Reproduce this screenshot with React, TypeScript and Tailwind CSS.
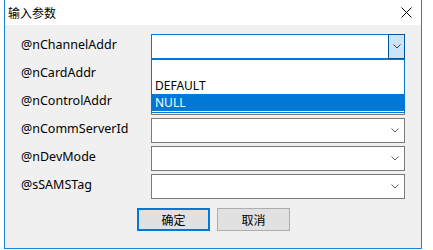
import type { ReactNode } from "react";

const params = [
  "@nChannelAddr",
  "@nCardAddr",
  "@nControlAddr",
  "@nCommServerId",
  "@nDevMode",
  "@sSAMSTag",
];

const font = { fontFamily: '"Noto Sans", "Noto Sans CJK SC", sans-serif' };

function Chevron({ color = "#606060" }: { color?: string }) {
  return (
    <svg width="8" height="5" viewBox="0 0 8 5" className="block">
      <polyline points="0.5,0.5 4,4 7.5,0.5" fill="none" stroke={color} strokeWidth="1" />
    </svg>
  );
}

function Combo({ active, children }: { active?: boolean; children?: ReactNode }) {
  if (active) {
    return (
      <div className="relative h-[25px] w-[254px]">
        <div className="flex h-full border border-[#0078d7] bg-white">
          <div className="flex-1" />
          <div className="-my-px -mr-px flex w-[17px] items-center justify-center border border-[#005499] bg-[#cce4f7]">
            <Chevron color="#404040" />
          </div>
        </div>
        {children}
      </div>
    );
  }
  return (
    <div className="flex h-[25px] w-[254px] items-center justify-end border border-[#7a7a7a] bg-white pr-[5px]">
      <Chevron />
    </div>
  );
}

export default function App() {
  return (
    <div className="h-[250px] w-[433px] bg-white text-[12px] text-black" style={font}>
      <div className="ml-[4px] flex h-[249px] w-[418px] flex-col border-x border-b border-[#1883d7]">
        <div className="flex h-[25px] items-center justify-between bg-white pl-[3px] pr-[9px]">
          <span className="leading-none" style={{ fontFamily: '"Noto Sans CJK SC", sans-serif' }}>
            输入参数
          </span>
          <svg width="11" height="11" viewBox="0 0 11 11" className="block">
            <path d="M0.5 0.5 L10.5 10.5 M10.5 0.5 L0.5 10.5" stroke="#000" strokeWidth="1" fill="none" />
          </svg>
        </div>

        <div className="flex flex-1 flex-col bg-[#f0f0f0] pt-[9px]">
          <div className="flex flex-col gap-[3px]">
            {params.map((name, i) => (
              <div key={name} className="flex h-[25px] items-center pl-[16px]">
                <div className="w-[130px] pb-[2px] text-[12.5px]">{name}</div>
                {i === 0 ? (
                  <Combo active>
                    <div className="absolute left-0 top-full z-10 w-[254px] border border-[#0078d7] bg-white pb-px">
                      <div className="h-[17px]" />
                      <div className="flex h-[17px] items-center pl-[3px]">DEFAULT</div>
                      <div className="flex h-[17px] items-center bg-[#0078d7] pl-[3px] text-white">NULL</div>
                    </div>
                  </Combo>
                ) : (
                  <Combo />
                )}
              </div>
            ))}
          </div>

          <div className="mt-[9px] flex gap-[7px] pl-[132px]" style={{ fontFamily: '"Noto Sans CJK SC", sans-serif' }}>
            <button className="flex h-[23px] w-[73px] items-center justify-center border-2 border-[#0078d7] bg-[#e1e1e1]">
              确定
            </button>
            <button className="flex h-[23px] w-[73px] items-center justify-center border border-[#adadad] bg-[#e1e1e1]">
              取消
            </button>
          </div>
        </div>
      </div>
    </div>
  );
}
